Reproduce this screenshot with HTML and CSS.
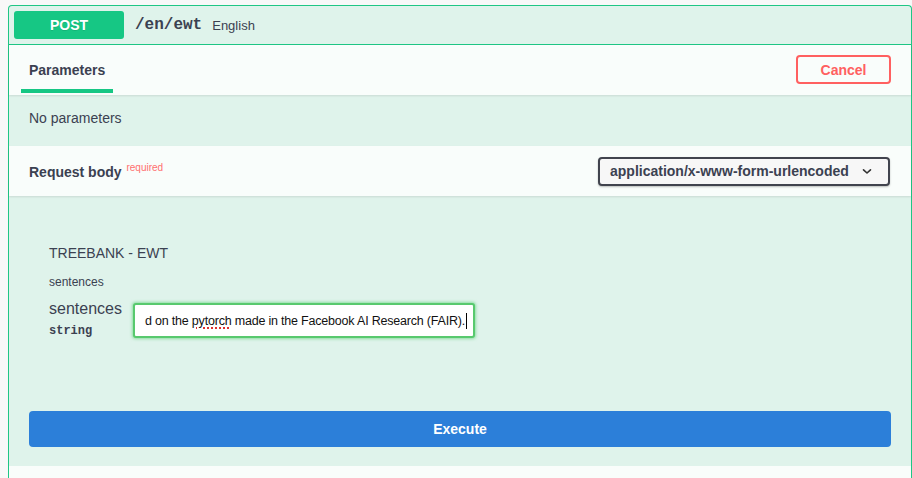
FILE: index.html
```html
<!DOCTYPE html>
<html>
<head>
<meta charset="utf-8">
<link rel="stylesheet" href="styles.css">
</head>
<body>
<div class="opblock">
  <div class="summary">
    <span class="method">POST</span>
    <span class="path">/en/ewt</span>
    <span class="desc">English</span>
  </div>
  <div class="section-header">
    <div class="tab">Parameters</div>
    <button class="cancel">Cancel</button>
  </div>
  <div class="no-params">No parameters</div>
  <div class="section-header rb">
    <div class="rb-title">Request body <sup class="required">required</sup></div>
    <div class="select">
      <span>application/x-www-form-urlencoded</span>
      <svg class="chev" width="10" height="7" viewBox="0 0 10 7"><path d="M1.5 1.8 L5 5 L8.5 1.8" fill="none" stroke="#333" stroke-width="1.6" stroke-linecap="round" stroke-linejoin="round"/></svg>
    </div>
  </div>
  <div class="body">
    <div class="form">
      <div class="model-title">TREEBANK - EWT</div>
      <div class="prop-small">sentences</div>
      <div class="param-row">
        <div class="param-name">
          <div class="pname">sentences</div>
          <div class="ptype">string</div>
        </div>
        <div class="input"><span>d on the <span class="spell">pytorch</span> made in the Facebook AI Research (FAIR).</span><span class="caret"></span></div>
      </div>
    </div>
    <button class="execute">Execute</button>
  </div>
  <div class="bottom"></div>
</div>
</body>
</html>
```

FILE: styles.css
```css
html, body {
  margin: 0;
  padding: 0;
  background: #f8f8f8;
  font-family: "Liberation Sans", Arial, sans-serif;
  color: #3b4151;
}
body {
  padding: 5px 0 0 8px;
  height: 478px;
  box-sizing: border-box;
  overflow: hidden;
}
.opblock {
  width: 904px;
  box-sizing: border-box;
  border: 1px solid #1fc685;
  border-bottom: none;
  border-radius: 4px 4px 0 0;
  background: #dff3eb;
  height: 480px;
}
.summary {
  display: flex;
  align-items: center;
  height: 38px;
  padding: 0 5px;
  border-bottom: 1px solid #1fc685;
}
.method {
  width: 110px;
  height: 28px;
  background: #16c784;
  color: #fff;
  font-weight: 700;
  font-size: 14px;
  border-radius: 3px;
  display: flex;
  align-items: center;
  justify-content: center;
  text-shadow: 0 1px 0 rgba(0,0,0,.1);
}
.path {
  font-family: "Liberation Mono", "Courier New", monospace;
  font-weight: 700;
  font-size: 16px;
  margin-left: 11px;
  color: #3b4151;
}
.desc {
  font-size: 13px;
  margin-left: 10px;
  color: #3b4151;
}
.section-header {
  display: flex;
  align-items: center;
  justify-content: space-between;
  height: 50px;
  padding: 0 20px;
  background: #f9fdfb;
  box-shadow: 0 1px 2px rgba(0,0,0,.1);
  position: relative;
}
.tab {
  position: relative;
  font-size: 14px;
  font-weight: 700;
  height: 50px;
  line-height: 50px;
}
.tab::after {
  content: "";
  position: absolute;
  left: -8px;
  right: -8px;
  bottom: 2px;
  height: 4px;
  background: #16c784;
}
.cancel {
  width: 95px;
  height: 29px;
  border: 2px solid #ff6060;
  border-radius: 4px;
  background: transparent;
  color: #ff6060;
  font-family: "Liberation Sans", Arial, sans-serif;
  font-weight: 700;
  font-size: 14px;
  padding: 0;
  margin-top: -1px;
}
.no-params {
  height: 51px;
  padding: 0 20px 5px 20px;
  box-sizing: border-box;
  display: flex;
  align-items: center;
  font-size: 14px;
}
.rb-title {
  font-size: 14px;
  font-weight: 700;
  padding-top: 1px;
}
.required {
  font-size: 10px;
  color: #ff6f6f;
  font-weight: 400;
  vertical-align: 0;
  position: relative;
  top: -6px;
  margin-left: 1px;
}
.select {
  width: 292px;
  height: 29px;
  box-sizing: border-box;
  border: 2px solid #41444e;
  border-radius: 4px;
  background: #f7f7f7;
  display: flex;
  align-items: center;
  justify-content: space-between;
  padding: 0 16px 0 10px;
  font-size: 14px;
  font-weight: 700;
  box-shadow: 0 1px 2px rgba(0,0,0,.25);
  margin-right: 1px;
}
.body {
  padding: 0 20px;
  height: 270px;
  display: flex;
  flex-direction: column;
}
.form {
  padding: 49px 20px 0 20px;
}
.model-title {
  font-size: 14px;
  height: 17px;
  line-height: 17px;
}
.prop-small {
  font-size: 12px;
  margin-top: 13px;
  line-height: 14px;
}
.param-row {
  display: flex;
  margin-top: 9px;
}
.param-name {
  width: 84px;
}
.pname {
  font-size: 16px;
  line-height: 19px;
  margin-top: 1px;
}
.ptype {
  font-family: "Liberation Mono", "Courier New", monospace;
  font-weight: 700;
  font-size: 12px;
  margin-top: 6px;
}
.input {
  width: 342px;
  height: 35px;
  box-sizing: border-box;
  margin-top: 5px;
  border: 2px solid #58c96e;
  box-shadow: 0 0 3px 1px rgba(73,204,100,.55);
  border-radius: 3px;
  background: #fff;
  display: flex;
  align-items: center;
  padding-left: 10px;
  font-size: 12.5px;
  letter-spacing: -0.2px;
  color: #111;
  white-space: nowrap;
  overflow: hidden;
}
.spell {
  text-decoration-line: underline;
  text-decoration-style: dotted;
  text-decoration-color: #e03030;
  text-decoration-thickness: 1.5px;
  text-underline-offset: 3px;
}
.caret {
  display: inline-block;
  width: 1px;
  height: 16px;
  background: #000;
  margin-left: 1px;
}
.execute {
  margin-top: 73px;
  height: 36px;
  border: none;
  border-radius: 4px;
  background: #2c7fd9;
  color: #fff;
  font-family: "Liberation Sans", Arial, sans-serif;
  font-weight: 700;
  font-size: 14px;
  width: 100%;
}
.bottom {
  height: 20px;
  background: #f9fdfb;
}
```
